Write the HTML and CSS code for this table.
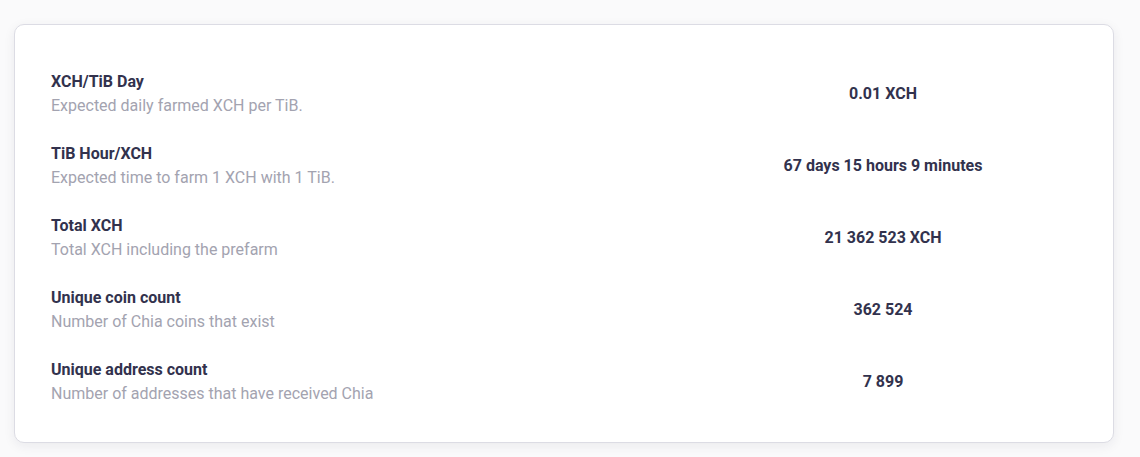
FILE: index.html
```html
<!DOCTYPE html>
<html lang="en">
<head>
<meta charset="utf-8">
<title>Stats</title>
<link rel="stylesheet" href="styles.css">
</head>
<body>
<div class="page">
  <section class="card">
    <div class="row">
      <div class="info">
        <div class="title">XCH/TiB Day</div>
        <div class="desc">Expected daily farmed XCH per TiB.</div>
      </div>
      <div class="value">0.01 XCH</div>
    </div>
    <div class="row">
      <div class="info">
        <div class="title">TiB Hour/XCH</div>
        <div class="desc">Expected time to farm 1 XCH with 1 TiB.</div>
      </div>
      <div class="value">67 days 15 hours 9 minutes</div>
    </div>
    <div class="row">
      <div class="info">
        <div class="title">Total XCH</div>
        <div class="desc">Total XCH including the prefarm</div>
      </div>
      <div class="value">21 362 523 XCH</div>
    </div>
    <div class="row">
      <div class="info">
        <div class="title">Unique coin count</div>
        <div class="desc">Number of Chia coins that exist</div>
      </div>
      <div class="value">362 524</div>
    </div>
    <div class="row">
      <div class="info">
        <div class="title">Unique address count</div>
        <div class="desc">Number of addresses that have received Chia</div>
      </div>
      <div class="value">7 899</div>
    </div>
  </section>
</div>
</body>
</html>
```

FILE: styles.css
```css
html, body {
  margin: 0;
  padding: 0;
  background: #fafafb;
  font-family: Roboto, "Liberation Sans", sans-serif;
}
.page {
  padding: 24px 26px 14px 14px;
}
.card {
  background: #ffffff;
  border: 1px solid #dcdce4;
  border-radius: 10px;
  box-shadow: 0 3px 12px rgba(33, 33, 52, 0.07);
  padding: 45px 30px 36px 36px;
  display: flex;
  flex-direction: column;
  gap: 24px;
}
.row {
  display: grid;
  grid-template-columns: 1fr 400px;
  align-items: center;
}
.title {
  font-size: 16px;
  line-height: 24px;
  font-weight: 700;
  color: #32324d;
}
.desc {
  font-size: 16px;
  line-height: 24px;
  color: #a3a3b0;
}
.value {
  text-align: center;
  font-size: 16px;
  line-height: 26px;
  font-weight: 700;
  color: #32324d;
}
```
